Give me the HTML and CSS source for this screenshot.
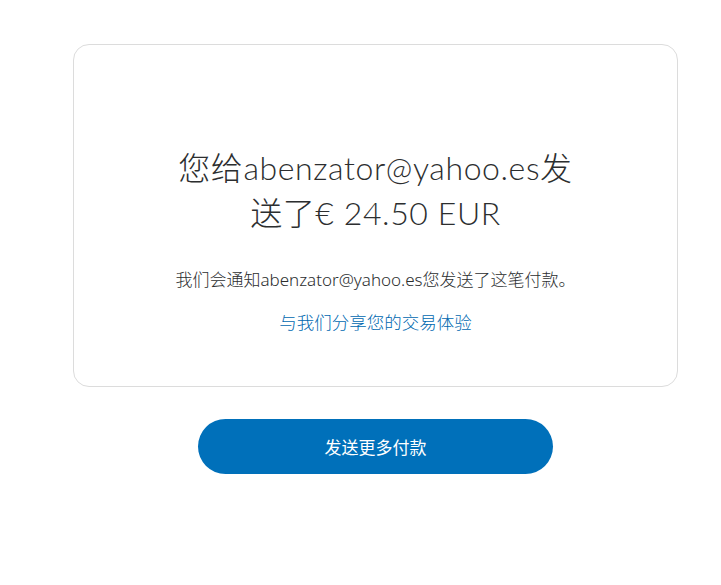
FILE: index.html
```html
<!DOCTYPE html>
<html lang="zh-CN">
<head>
    <meta charset="UTF-8">
    <meta name="viewport" content="width=device-width, initial-scale=1.0">
    <title>付款已发送</title>
    <link rel="stylesheet" href="styles.css">
</head>
<body>

<div class="page">
    <div class="card">
        <h1 class="title">您给abenzator@yahoo.es发送了€ 24.50 EUR</h1>
        <p class="note">我们会通知abenzator@yahoo.es您发送了这笔付款。</p>
        <a class="share" href="#">与我们分享您的交易体验</a>
    </div>

    <div class="actions">
        <button class="btn-primary">发送更多付款</button>
    </div>
</div>

</body>
</html>
```

FILE: styles.css
```css
body {
    margin: 0;
    background: #fff;
    font-family: "Noto Sans", "Noto Sans CJK SC", sans-serif;
    color: #2c2e2f;
}
.page {
    width: 605px;
    margin: 44px 0 0 73px;
}
.card {
    border: 1px solid #dcdcdc;
    border-radius: 16px;
    padding: 100px 20px 52px;
    text-align: center;
}
.title {
    max-width: 410px;
    margin: 0 auto;
    font-family: "Lato", "Noto Sans CJK SC", sans-serif;
    font-weight: 300;
    font-size: 32px;
    line-height: 45px;
    letter-spacing: 0.6px;
    color: #2c2e2f;
}
.note {
    margin: 33px 0 0;
    font-size: 17px;
    font-weight: 300;
    line-height: 24px;
}
.share {
    display: inline-block;
    margin-top: 18px;
    font-size: 17.5px;
    font-weight: 300;
    line-height: 24px;
    color: #0068b0;
    text-decoration: none;
}
.actions {
    display: flex;
    justify-content: center;
    margin-top: 32px;
}
.btn-primary {
    width: 355px;
    height: 55px;
    border: none;
    border-radius: 28px;
    background: #0070ba;
    color: #fff;
    font-family: "Noto Sans", "Noto Sans CJK SC", sans-serif;
    font-size: 17px;
    cursor: pointer;
}
```
